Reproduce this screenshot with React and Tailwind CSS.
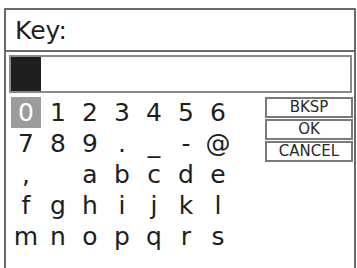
const rows = [
  ["0", "1", "2", "3", "4", "5", "6"],
  ["7", "8", "9", ".", "_", "-", "@"],
  [",", " ", "a", "b", "c", "d", "e"],
  ["f", "g", "h", "i", "j", "k", "l"],
  ["m", "n", "o", "p", "q", "r", "s"],
];

const buttons = ["BKSP", "OK", "CANCEL"];

export default function App() {
  return (
    <div className="w-[357px] h-[268px] bg-white overflow-hidden pt-2 pl-1 pr-[1px] font-['DejaVu_Sans',sans-serif] text-[#1e1e1e]">
      <div className="h-full border-2 border-b-0 border-[#6a6a6a]">
        {/* header */}
        <div className="h-[42px] border-b-2 border-[#6a6a6a] flex items-center pl-[9px] text-[25px] leading-none">
          Key:
        </div>

        {/* text entry */}
        <div className="mt-[3px] ml-[3px] mr-[2px] h-[38px] border-2 border-[#8a8a8a] flex">
          <div className="w-[30px] h-full bg-[#1f1f1f]" />
        </div>

        <div className="flex mt-[4px] ml-[4px]">
          <div className="flex flex-col">
            {rows.map((row, r) => (
              <div key={r} className="flex h-[31px]">
                {row.map((ch, c) => (
                  <div key={c} className="w-[32px] h-[31px] flex justify-center">
                    <span
                      className={
                        r === 0 && c === 0
                          ? "w-[30px] h-[31px] bg-[#9c9c9c] text-white text-center text-[25px] leading-[31px]"
                          : "w-[30px] h-[31px] text-center text-[25px] leading-[31px] whitespace-pre"
                      }
                    >
                      {ch}
                    </span>
                  </div>
                ))}
              </div>
            ))}
          </div>

          <div className="ml-[31px] flex flex-col gap-[1px]">
            {buttons.map((b) => (
              <div
                key={b}
                className="w-[88px] h-[21px] border-2 border-[#7a7a7a] flex items-center justify-center text-[15px] leading-none text-[#2a2a2a]"
              >
                {b}
              </div>
            ))}
          </div>
        </div>
      </div>
    </div>
  );
}
